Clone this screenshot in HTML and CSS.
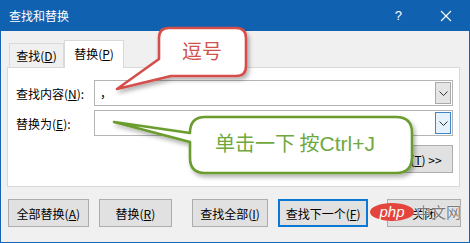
FILE: index.html
```html
<!DOCTYPE html>
<html lang="zh-CN">
<head>
    <meta charset="UTF-8">
    <title>查找和替换</title>
    <link rel="stylesheet" href="styles.css">
</head>
<body>
    <div class="window">
        <div class="titlebar">
            <span class="title">查找和替换</span>
            <span class="help">?</span>
            <svg class="close" width="12" height="12" viewBox="0 0 12 12">
                <path d="M1 1 L11 11 M11 1 L1 11" stroke="#fff" stroke-width="1.2" fill="none"/>
            </svg>
        </div>
        <div class="content">
            <div class="tabs">
                <div class="tab">查找(<u>D</u>)</div>
                <div class="tab active">替换(<u>P</u>)</div>
            </div>
            <div class="panel">
                <div class="row">
                    <label class="label">查找内容(<u>N</u>):</label>
                    <div class="combo">
                        <span class="value">，</span>
                        <span class="drop">
                            <svg width="9" height="5" viewBox="0 0 9 5"><path d="M0.5 0.5 L4.5 4.5 L8.5 0.5" stroke="#333" fill="none"/></svg>
                        </span>
                    </div>
                </div>
                <div class="row">
                    <label class="label">替换为(<u>E</u>):</label>
                    <div class="combo">
                        <span class="value"></span>
                        <span class="drop focus">
                            <svg width="9" height="5" viewBox="0 0 9 5"><path d="M0.5 0.5 L4.5 4.5 L8.5 0.5" stroke="#333" fill="none"/></svg>
                        </span>
                    </div>
                </div>
                <div class="more-row">
                    <button class="btn more">更多(<u>T</u>) &gt;&gt;</button>
                </div>
            </div>
            <div class="actions">
                <button class="btn w81">全部替换(<u>A</u>)</button>
                <button class="btn w74 gap10">替换(<u>R</u>)</button>
                <button class="btn w76 gap20">查找全部(<u>I</u>)</button>
                <button class="btn w91 gap10 default">查找下一个(<u>F</u>)</button>
                <button class="btn w74 gap19">关闭</button>
            </div>
        </div>
    </div>

    <!-- 标注 -->
    <svg class="callouts" width="470" height="243" viewBox="0 0 470 243">
        <defs>
            <filter id="shadow" x="-20%" y="-20%" width="140%" height="160%">
                <feDropShadow dx="2" dy="3" stdDeviation="2" flood-color="#000" flood-opacity="0.3"/>
            </filter>
        </defs>
        <path class="bubble red" filter="url(#shadow)"
              d="M117,89 L159,59 L159,38 Q159,28 169,28 L236,28 Q246,28 246,38 L246,66 Q246,76 236,76 L171,76 Z"/>
        <text class="bubble-text red-text" x="202" y="59" text-anchor="middle">逗号</text>
        <path class="bubble green" filter="url(#shadow)"
              d="M114,122 L190,133 Q190,117 205,117 L396,117 Q412,117 412,133 L412,157 Q412,173 396,173 L205,173 Q190,173 190,158 L190,142 Z"/>
        <text class="bubble-text green-text" x="215" y="151">单击一下 按<tspan class="latin">Ctrl+J</tspan></text>
    </svg>

    <div class="watermark">
        <span class="php">php</span><span class="cn">中文网</span>
    </div>
</body>
</html>
```

FILE: styles.css
```css
html, body {
    margin: 0;
    padding: 0;
}
body {
    position: relative;
    width: 470px;
    height: 243px;
    overflow: hidden;
    font-family: "Noto Sans CJK SC", "Liberation Sans", sans-serif;
    font-size: 12px;
    color: #000;
    background: #f0f0f0;
}
u {
    text-decoration: underline;
    text-underline-offset: 1px;
}
.window {
    box-sizing: border-box;
    width: 470px;
    height: 243px;
    border: 1px solid #1764b4;
    border-top: none;
    background: #f0f0f0;
}
.titlebar {
    display: flex;
    align-items: center;
    height: 31px;
    margin: 0 -1px;
    padding: 0 18px 0 9px;
    background: #1062b1;
    color: #fff;
}
.title {
    flex: 1;
    font-size: 12px;
}
.help {
    font-family: "Liberation Sans", sans-serif;
    font-size: 13px;
    margin-right: 38px;
}
.content {
    padding: 9px 8px 0 6px;
}
.tabs {
    display: flex;
    align-items: flex-end;
    margin-left: 2px;
    height: 27px;
}
.tab {
    box-sizing: border-box;
    width: 55px;
    height: 24px;
    border: 1px solid #d9d9d9;
    border-bottom: none;
    text-align: center;
    line-height: 24px;
    background: #f0f0f0;
}
.tab.active {
    position: relative;
    z-index: 1;
    width: 60px;
    height: 28px;
    margin-bottom: -1px;
    line-height: 26px;
    background: #fff;
}
.panel {
    box-sizing: border-box;
    width: 453px;
    border: 1px solid #d9d9d9;
    background: #fff;
    padding: 12px 6px 13px 8px;
}
.row {
    display: flex;
    align-items: center;
    height: 26px;
    margin-bottom: 4px;
}
.label {
    width: 78px;
}
.combo {
    box-sizing: border-box;
    display: flex;
    flex: 1;
    height: 26px;
    padding: 1px;
    border: 1px solid #b4b4b4;
}
.value {
    flex: 1;
    padding-left: 4px;
    line-height: 22px;
}
.drop {
    box-sizing: border-box;
    display: flex;
    align-items: center;
    justify-content: center;
    width: 16px;
    border: 1px solid #a9a9a9;
    background: #e5e5e5;
}
.drop.focus {
    border-color: #3f86c8;
    background: #e5f1fb;
}
.more-row {
    display: flex;
    justify-content: flex-end;
    margin-top: 9px;
}
.btn {
    box-sizing: border-box;
    height: 28px;
    padding: 0;
    border: 1px solid #adadad;
    background: #e1e1e1;
    font-family: inherit;
    font-size: 12px;
    color: #000;
}
.more {
    width: 78px;
}
.actions {
    display: flex;
    margin-top: 12px;
    padding-left: 1px;
}
.w81 { width: 81px; }
.w74 { width: 74px; }
.w76 { width: 76px; }
.w91 { width: 91px; }
.gap10 { margin-left: 10px; }
.gap19 { margin-left: 19px; }
.gap20 { margin-left: 20px; }
.btn.default {
    border: 2px solid #0a78d4;
}

/* 标注气泡 */
.callouts {
    position: absolute;
    left: 0;
    top: 0;
    pointer-events: none;
}
.bubble {
    fill: #fff;
    stroke-width: 2.6;
    stroke-linejoin: round;
}
.bubble.red {
    stroke: #d4504c;
}
.bubble.green {
    stroke: #6a9c2e;
}
.bubble-text {
    font-family: "Noto Sans CJK SC", "Liberation Sans", sans-serif;
    font-size: 20px;
}
.bubble-text .latin {
    font-family: "Liberation Sans", sans-serif;
    font-size: 21px;
}
.red-text {
    fill: #d2524e;
}
.green-text {
    fill: #6ea83e;
}

/* 水印 */
.watermark {
    position: absolute;
    left: 370px;
    top: 201px;
    display: flex;
    align-items: center;
}
.php {
    display: inline-block;
    width: 44px;
    height: 18px;
    border-radius: 50%;
    background: #e3443c;
    color: #fff;
    font-family: "Liberation Sans", sans-serif;
    font-style: italic;
    font-size: 15px;
    line-height: 17px;
    text-align: center;
}
.cn {
    margin-left: 2px;
    font-size: 15px;
    color: #7a7a7a;
    text-shadow: 0 0 1px #fff, 0 0 1px #fff;
}
```
